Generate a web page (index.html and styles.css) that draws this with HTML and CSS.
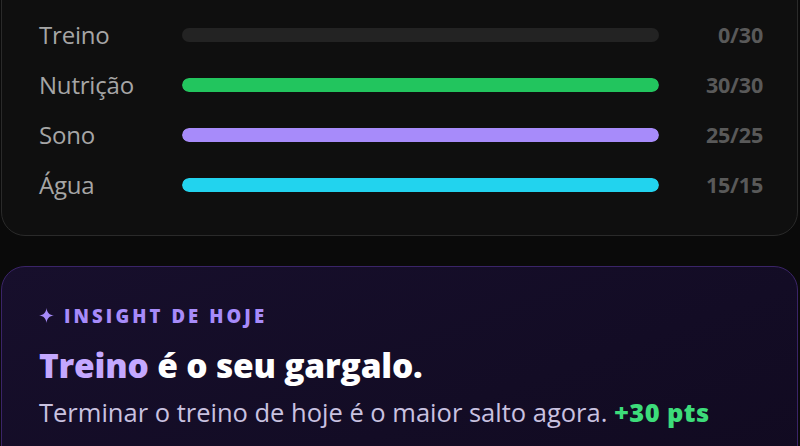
FILE: index.html
```html
<!DOCTYPE html>
<html lang="pt-BR">
<head>
<meta charset="utf-8">
<title>Progresso de hoje</title>
<link rel="stylesheet" href="styles.css">
</head>
<body>
<main class="page">
  <section class="card breakdown">
    <div class="row">
      <span class="label">Treino</span>
      <div class="track"><div class="fill" style="width:0%"></div></div>
      <span class="score">0/30</span>
    </div>
    <div class="row">
      <span class="label">Nutrição</span>
      <div class="track"><div class="fill green" style="width:100%"></div></div>
      <span class="score">30/30</span>
    </div>
    <div class="row">
      <span class="label">Sono</span>
      <div class="track"><div class="fill purple" style="width:100%"></div></div>
      <span class="score">25/25</span>
    </div>
    <div class="row">
      <span class="label">Água</span>
      <div class="track"><div class="fill cyan" style="width:100%"></div></div>
      <span class="score">15/15</span>
    </div>
  </section>

  <section class="card insight">
    <div class="eyebrow">
      <svg class="spark" viewBox="0 0 14 14" width="15" height="15" aria-hidden="true">
        <path d="M7 0 C7.5 4.4 9.6 6.5 14 7 C9.6 7.5 7.5 9.6 7 14 C6.5 9.6 4.4 7.5 0 7 C4.4 6.5 6.5 4.4 7 0 Z" fill="currentColor"/>
      </svg>
      INSIGHT DE HOJE
    </div>
    <h2 class="headline"><span class="accent">Treino</span> é o seu gargalo.</h2>
    <p class="detail">Terminar o treino de hoje é o maior salto agora. <strong class="pts">+30 pts</strong></p>
  </section>
</main>
</body>
</html>
```

FILE: styles.css
```css
* { box-sizing: border-box; }

html, body {
  margin: 0;
  height: 100%;
  background: #0a0a0a;
  overflow: hidden;
}

body {
  font-family: "Open Sans", "Noto Sans", sans-serif;
  color: #e5e5e5;
}

.page {
  width: 798px;
  padding-left: 1px;
  margin-top: -30px;
  display: flex;
  flex-direction: column;
  gap: 30px;
}

.card {
  border-radius: 24px;
}

/* score breakdown */
.breakdown {
  background:
    radial-gradient(ellipse 120px 30px at 150px 0, rgba(120, 70, 200, 0.18), transparent 70%),
    #0f0f0f;
  border: 1px solid #2a2a2a;
  padding: 38px 34px 26px 37px;
}

.row {
  display: grid;
  grid-template-columns: 143px 1fr 104px;
  align-items: center;
  height: 50px;
}

.label {
  font-size: 24px;
  color: #a6a6a6;
  letter-spacing: -0.2px;
}

.track {
  height: 14px;
  border-radius: 7px;
  background: #232323;
  overflow: hidden;
  margin-top: 2px;
}

.fill {
  height: 100%;
  border-radius: 7px;
}
.fill.green { background: #22c55e; }
.fill.purple { background: #a78bfa; }
.fill.cyan { background: #22d3ee; }

.score {
  text-align: right;
  font-size: 21.5px;
  font-weight: 700;
  color: #595959;
  letter-spacing: -0.2px;
}

/* insight card */
.insight {
  background: linear-gradient(160deg, #170f2c 0%, #130c25 60%, #110a20 100%);
  border: 1px solid #3a2468;
  padding: 38px 37px 40px 37px;
  min-height: 220px;
}

.eyebrow {
  display: flex;
  align-items: center;
  height: 20px;
  font-size: 18.5px;
  font-weight: 800;
  letter-spacing: 3.1px;
  color: #a78bfa;
}

.spark {
  flex: none;
  margin: 0 10px 0 0;
}

.headline {
  margin: 20px 0 0;
  font-size: 33.5px;
  line-height: 40px;
  font-weight: 800;
  color: #ffffff;
  letter-spacing: -0.2px;
}

.accent { color: #c4a8ff; }

.detail {
  margin: 11px 0 0;
  font-size: 25.5px;
  line-height: 32px;
  color: #c9c2e0;
}

.pts {
  font-weight: 800;
  color: #3ddc7a;
  letter-spacing: 0.4px;
}
```
